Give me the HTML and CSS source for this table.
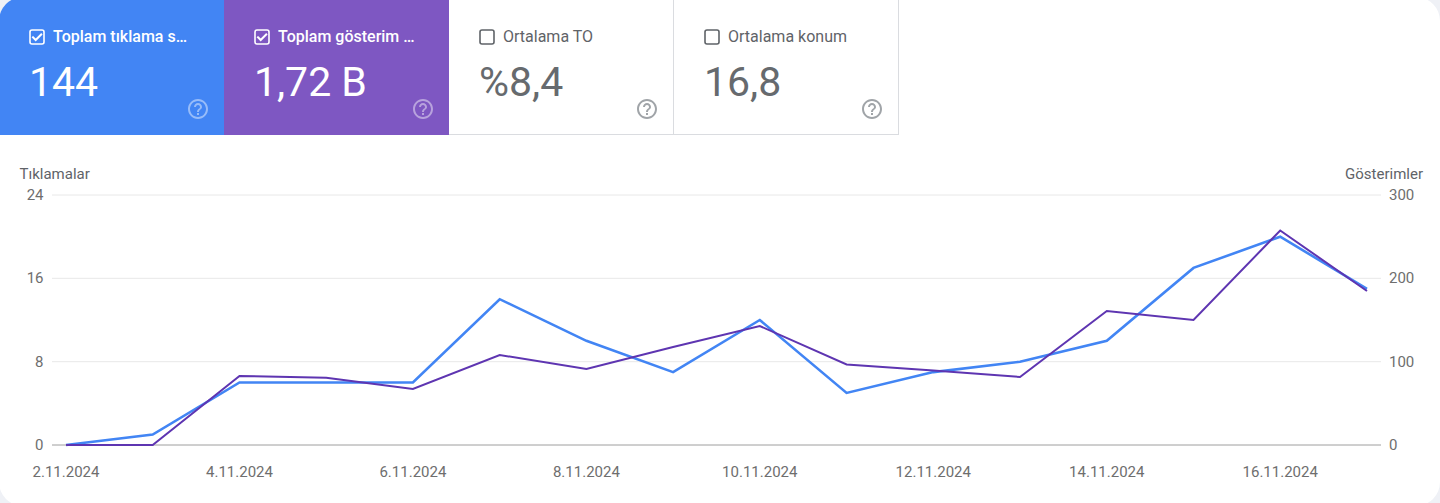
FILE: index.html
```html
<!DOCTYPE html>
<html lang="tr">
<head>
<meta charset="utf-8">
<title>Performans</title>
<link rel="stylesheet" href="styles.css">
</head>
<body>
<div class="card">
  <div class="tiles">
    <div class="tile tile-clicks">
      <div class="tile-head">
        <svg class="cb" viewBox="0 0 16 16"><rect x="1" y="1" width="14" height="14" rx="2"/><path d="M4 8.3l2.7 2.7L12.2 5.4"/></svg>
        <span class="tile-label">Toplam tıklama sayısı</span>
      </div>
      <div class="tile-body">
        <span class="tile-value">144</span>
        <svg class="help" viewBox="0 0 24 24"><path d="M11 18h2v-2h-2v2zm1-16C6.48 2 2 6.480 2 12s4.48 10 10 10 10-4.48 10-10S17.52 2 12 2zm0 18c-4.41 0-8-3.59-8-8s3.59-8 8-8 8 3.59 8 8-3.59 8-8 8zm0-14c-2.21 0-4 1.79-4 4h2c0-1.1.9-2 2-2s2 .9 2 2c0 2-3 1.75-3 5h2c0-2.25 3-2.5 3-5 0-2.21-1.79-4-4-4z"/></svg>
      </div>
    </div>
    <div class="tile tile-impr">
      <div class="tile-head">
        <svg class="cb" viewBox="0 0 16 16"><rect x="1" y="1" width="14" height="14" rx="2"/><path d="M4 8.3l2.7 2.7L12.2 5.4"/></svg>
        <span class="tile-label">Toplam gösterim sayısı</span>
      </div>
      <div class="tile-body">
        <span class="tile-value">1,72 B</span>
        <svg class="help" viewBox="0 0 24 24"><path d="M11 18h2v-2h-2v2zm1-16C6.48 2 2 6.48 2 12s4.48 10 10 10 10-4.48 10-10S17.52 2 12 2zm0 18c-4.41 0-8-3.59-8-8s3.59-8 8-8 8 3.59 8 8-3.59 8-8 8zm0-14c-2.21 0-4 1.79-4 4h2c0-1.1.9-2 2-2s2 .9 2 2c0 2-3 1.75-3 5h2c0-2.25 3-2.5 3-5 0-2.21-1.79-4-4-4z"/></svg>
      </div>
    </div>
    <div class="tile tile-off">
      <div class="tile-head">
        <svg class="cb" viewBox="0 0 16 16"><rect x="1" y="1" width="14" height="14" rx="2"/></svg>
        <span class="tile-label">Ortalama TO</span>
      </div>
      <div class="tile-body">
        <span class="tile-value">%8,4</span>
        <svg class="help" viewBox="0 0 24 24"><path d="M11 18h2v-2h-2v2zm1-16C6.48 2 2 6.48 2 12s4.48 10 10 10 10-4.48 10-10S17.52 2 12 2zm0 18c-4.41 0-8-3.59-8-8s3.59-8 8-8 8 3.59 8 8-3.59 8-8 8zm0-14c-2.21 0-4 1.79-4 4h2c0-1.1.9-2 2-2s2 .9 2 2c0 2-3 1.75-3 5h2c0-2.25 3-2.5 3-5 0-2.21-1.79-4-4-4z"/></svg>
      </div>
    </div>
    <div class="tile tile-off">
      <div class="tile-head">
        <svg class="cb" viewBox="0 0 16 16"><rect x="1" y="1" width="14" height="14" rx="2"/></svg>
        <span class="tile-label">Ortalama konum</span>
      </div>
      <div class="tile-body">
        <span class="tile-value">16,8</span>
        <svg class="help" viewBox="0 0 24 24"><path d="M11 18h2v-2h-2v2zm1-16C6.48 2 2 6.48 2 12s4.48 10 10 10 10-4.48 10-10S17.52 2 12 2zm0 18c-4.41 0-8-3.59-8-8s3.59-8 8-8 8 3.59 8 8-3.59 8-8 8zm0-14c-2.21 0-4 1.79-4 4h2c0-1.1.9-2 2-2s2 .9 2 2c0 2-3 1.75-3 5h2c0-2.25 3-2.5 3-5 0-2.21-1.79-4-4-4z"/></svg>
      </div>
    </div>
  </div>

  <svg class="chart" viewBox="-1 135 1441 371" width="1441" height="371">
    <g class="axis-title">
      <text x="19.5" y="179">Tıklamalar</text>
      <text x="1423" y="179" text-anchor="end">Gösterimler</text>
    </g>
    <g class="grid">
      <line x1="52" y1="195" x2="1381" y2="195"/>
      <line x1="52" y1="278.3" x2="1381" y2="278.3"/>
      <line x1="52" y1="361.7" x2="1381" y2="361.7"/>
    </g>
    <line class="baseline" x1="52" y1="445" x2="1381" y2="445"/>
    <g class="tick tick-left">
      <text x="43.5" y="200">24</text>
      <text x="43.5" y="283.3">16</text>
      <text x="43.5" y="366.7">8</text>
      <text x="43.5" y="450">0</text>
    </g>
    <g class="tick tick-right">
      <text x="1389" y="200">300</text>
      <text x="1389" y="283.3">200</text>
      <text x="1389" y="366.7">100</text>
      <text x="1389" y="450">0</text>
    </g>
    <g class="tick tick-x">
      <text x="66" y="476.5">2.11.2024</text>
      <text x="239.5" y="476.5">4.11.2024</text>
      <text x="412.9" y="476.5">6.11.2024</text>
      <text x="586.4" y="476.5">8.11.2024</text>
      <text x="759.8" y="476.5">10.11.2024</text>
      <text x="933.3" y="476.5">12.11.2024</text>
      <text x="1106.8" y="476.5">14.11.2024</text>
      <text x="1280.2" y="476.5">16.11.2024</text>
    </g>
    <polyline class="line-clicks" points="66,445 152.7,434.6 239.5,382.5 326.2,382.5 412.9,382.5 499.7,299.2 586.4,340.8 673.1,372.1 759.8,320 846.6,392.9 933.3,372.1 1020,361.7 1106.8,340.8 1193.5,267.9 1280.2,236.7 1367,288.8"/>
    <polyline class="line-impr" points="66,445 152.7,445 239.5,376 326.2,377.7 412.9,389 499.7,355 586.4,369 673.1,347 759.8,326 846.6,364.5 933.3,370.5 1020,377 1106.8,311 1193.5,320 1280.2,230.5 1367,291"/>
  </svg>
</div>
</body>
</html>
```

FILE: styles.css
```css
html, body {
  margin: 0;
  padding: 0;
}

body {
  background: #eff1f6;
  width: 1440px;
  height: 503px;
  overflow: hidden;
  font-family: Roboto, "Noto Sans", Arial, sans-serif;
}

.card {
  background: #ffffff;
  border-radius: 24px;
  overflow: hidden;
  width: 1441px;
  height: 509px;
  margin: -3px 0 0 -1px;
}

.tiles {
  display: flex;
}

.tile {
  box-sizing: border-box;
  width: 225px;
  height: 138px;
  padding: 30px 14px 0 30px;
  display: flex;
  flex-direction: column;
  border-bottom: 1px solid transparent;
}

.tile-clicks {
  background: #4285f4;
  color: #ffffff;
}

.tile-impr {
  background: #7e57c2;
  color: #ffffff;
}

.tile-off {
  background: #ffffff;
  color: #5f6368;
  border-right: 1px solid #dadce0;
  border-bottom-color: #dadce0;
}

.tile-head {
  display: flex;
  align-items: center;
  gap: 8px;
  height: 20px;
}

.cb {
  width: 16px;
  height: 16px;
  flex: none;
  fill: none;
  stroke-width: 1.6;
}

.cb rect {
  stroke: currentColor;
}

.cb path {
  stroke: currentColor;
  stroke-width: 2;
  stroke-linecap: square;
}

.tile-off .cb rect {
  stroke: #5f6368;
}

.tile-label {
  font-size: 16px;
  line-height: 20px;
  white-space: nowrap;
  overflow: hidden;
  text-overflow: ellipsis;
  width: 137px;
}

.tile-clicks .tile-label,
.tile-impr .tile-label {
  font-weight: 500;
}

.tile-body {
  display: flex;
  justify-content: space-between;
  align-items: flex-end;
  margin-top: 11px;
}

.tile-value {
  font-size: 41px;
  line-height: 48px;
  font-weight: 400;
}

.tile-off .tile-value {
  color: #666a6e;
}

.help {
  width: 24px;
  height: 24px;
  flex: none;
  margin-bottom: -15px;
}

.tile-clicks .help,
.tile-impr .help {
  fill: rgba(255, 255, 255, 0.45);
}

.tile-off .help {
  fill: #a0a4a8;
}

.chart {
  display: block;
  font-family: Roboto, "Noto Sans", Arial, sans-serif;
}

.axis-title text {
  font-size: 15px;
  fill: #5f6368;
}

.grid line {
  stroke: #e8e8e8;
  stroke-width: 1;
}

.baseline {
  stroke: #9e9e9e;
  stroke-width: 1;
}

.tick text {
  font-size: 15px;
  fill: #6e6e6e;
}

.tick-left text {
  text-anchor: end;
}

.tick-right text {
  text-anchor: start;
}

.tick-x text {
  text-anchor: middle;
}

.line-clicks {
  fill: none;
  stroke: #4285f4;
  stroke-width: 2.6;
  stroke-linejoin: miter;
}

.line-impr {
  fill: none;
  stroke: #5e35b1;
  stroke-width: 2;
  stroke-linejoin: miter;
}
```
